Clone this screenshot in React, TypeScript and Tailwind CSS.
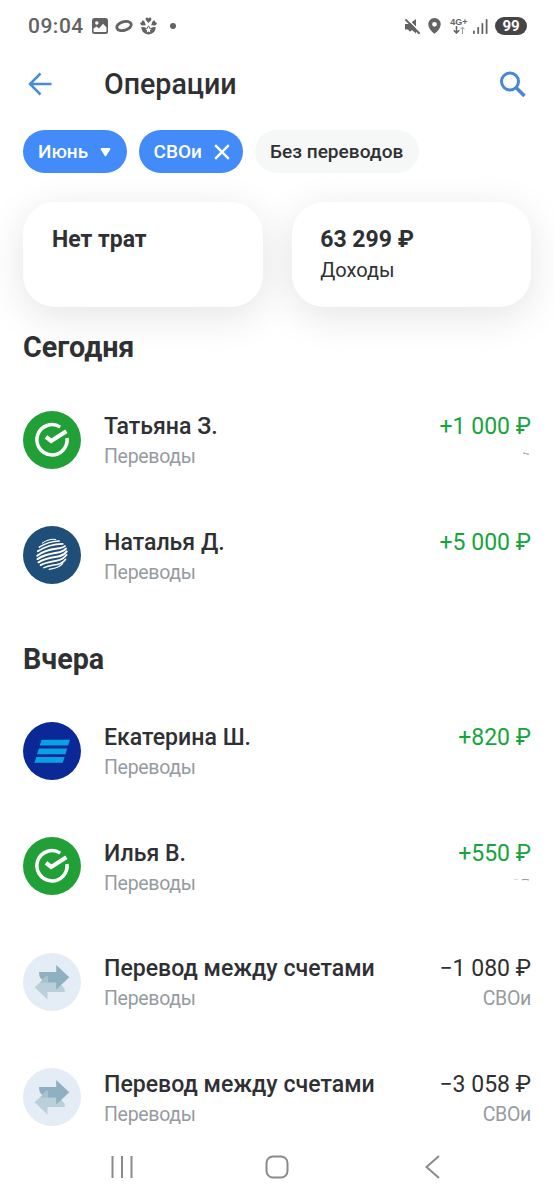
import type { ReactNode } from 'react';

type Bank = 'sber' | 'gpb' | 'vtb' | 'transfer';

interface Operation {
    id: number;
    bank: Bank;
    name: string;
    category: string;
    amount: string;
    income?: boolean;
    account?: ReactNode;
}

const today: Operation[] = [
    {
        id: 1,
        bank: 'sber',
        name: 'Татьяна З.',
        category: 'Переводы',
        amount: '+1 000 ₽',
        income: true,
        account: (
            <svg className="mt-[10px] h-[4px] w-[9px]" viewBox="0 0 9 4" fill="none">
                <path d="M1 1.2C3 .6 4 2.4 7 2.2" stroke="#8d9196" strokeWidth="1" />
            </svg>
        ),
    },
    { id: 2, bank: 'gpb', name: 'Наталья Д.', category: 'Переводы', amount: '+5 000 ₽', income: true },
];

const yesterday: Operation[] = [
    { id: 3, bank: 'vtb', name: 'Екатерина Ш.', category: 'Переводы', amount: '+820 ₽', income: true },
    {
        id: 4,
        bank: 'sber',
        name: 'Илья В.',
        category: 'Переводы',
        amount: '+550 ₽',
        income: true,
        account: (
            <svg className="mt-[9px] h-[4px] w-[18px]" viewBox="0 0 18 4" fill="none">
                <path d="M1 1.5h4" stroke="#dcdee0" strokeWidth="1" />
                <path d="M9 1.8q3-1 7 .2" stroke="#8d9196" strokeWidth="1" />
            </svg>
        ),
    },
    { id: 5, bank: 'transfer', name: 'Перевод между счетами', category: 'Переводы', amount: '−1 080 ₽', account: 'СВОи' },
    { id: 6, bank: 'transfer', name: 'Перевод между счетами', category: 'Переводы', amount: '−3 058 ₽', account: 'СВОи' },
];

function SberIcon() {
    return (
        <svg className="size-[58px]" viewBox="0 0 58 58" fill="none">
            <circle cx="29" cy="29" r="29" fill="#21a038" />
            <path d="M37.2 16.1A15.1 15.1 0 1 0 44 27" stroke="#fff" strokeWidth="3.5" />
            <path d="M23 25.8l5.2 4.2L43.4 20.2" stroke="#fff" strokeWidth="4.2" />
        </svg>
    );
}

function GpbIcon() {
    return (
        <svg className="size-[58px]" viewBox="0 0 58 58" fill="none">
            <circle cx="29" cy="29" r="29" fill="#1f4e79" />
            <g stroke="#fff" strokeLinecap="round" transform="rotate(-7 29 29) translate(-.6 -.9) scale(1.02)">
                <path d="M21 16.6q7-3.6 13.6-2" strokeWidth="1" />
                <path d="M17.5 20.2q10-4.8 20.3-3.7" strokeWidth="1.4" />
                <path d="M15.6 24q12-5.8 25.2-4.2" strokeWidth="1.7" />
                <path d="M14.5 28.2c6-3.6 14-4.6 20.5-4.6q5.5 0 7.6-1.4" strokeWidth="1.9" />
                <path d="M14.4 31.5c7-3.4 14-3.6 19.5-3.8q6.5-.3 9.4-3" strokeWidth="2" />
                <path d="M15 34.8c6-2.8 13-3 18.5-3.2q7-.3 10.2-4" strokeWidth="2" />
                <path d="M16.7 37.8c5-2 11-2 16.5-2.4q6.5-.4 10-4.5" strokeWidth="1.8" />
                <path d="M19.6 40.6c5-1.3 9-1.1 13.4-1.5q5.5-.5 8.8-4" strokeWidth="1.5" />
                <path d="M24.5 43c4-.5 9.5.2 14-4.2" strokeWidth="1.1" />
            </g>
        </svg>
    );
}

function VtbIcon() {
    return (
        <svg className="size-[58px]" viewBox="0 0 58 58">
            <circle cx="29" cy="29" r="29" fill="#0a2896" />
            <g fill="#0aa0e6">
                <path d="M18.6 17.8H47l-1.9 5.8H16.7z" />
                <path d="M15.9 26.4h28.4l-1.9 5.8H14z" />
                <path d="M13.2 35h28.4l-1.9 5.8H11.3z" />
            </g>
        </svg>
    );
}

function TransferIcon() {
    return (
        <svg className="size-[58px]" viewBox="0 0 58 58">
            <circle cx="29" cy="29" r="29" fill="#e4ecf5" />
            <path d="M24.5 22.4L11.7 34.2l12.8 12.3V39h17.3q.2-3.800-2.400-5.900L36 29H24.5z" fill="#b9cfd9" />
            <path d="M33.2 11.900L46.300 24.200 33.200 36.500v-7.100h-8.700v-7l-5.400 4.600q-3-2.500-3.100-8h17.200z" fill="#8fb0c0" />
            <path d="M24.500 22.400v7h-7.600z" fill="#a6c0cc" />
        </svg>
    );
}

const icons: Record<Bank, () => ReactNode> = {
    sber: SberIcon,
    gpb: GpbIcon,
    vtb: VtbIcon,
    transfer: TransferIcon,
};

function StatusBar() {
    return (
        <div className="flex h-[52px] items-center justify-between pl-[28px] pr-[27px] text-[#636363]">
            <div className="flex items-center">
                <span className="w-[56px] whitespace-nowrap text-[21px] font-medium leading-[26px] tracking-[0.5px]">09:04</span>
                <svg className="ml-[8px] h-[16px] w-[16px]" viewBox="0 0 16 16" fill="none">
                    <rect width="16" height="16" rx="2.5" fill="#636363" />
                    <circle cx="4.8" cy="5" r="1.7" fill="#fff" />
                    <path d="M1.5 13V10.5L4.5 8.6 7 10.5 11 5.8 14.5 9.5V13q0 1-1 1h-11q-1 0-1-1z" fill="#fff" />
                </svg>
                <svg className="ml-[7px] h-[14px] w-[18px]" viewBox="0 0 18 14" fill="none">
                    <ellipse cx="9" cy="7" rx="7.4" ry="4.3" transform="rotate(-16 9 7)" stroke="#636363" strokeWidth="2.8" />
                </svg>
                <svg className="ml-[7px] h-[18px] w-[17px]" viewBox="0 0 17 18" fill="#636363">
                    <path d="M8.5 6L5.9 3.2Q5 .5 7 .4q1.2 0 1.5 1Q8.800.4 10 .4q2 .1 1.100 2.800z" />
                    <path d="M5.800 8.200L2 8.400Q-.3 7.500.3 5.900q.6-.9 1.600-.6-.3-1.500.8-1.700 1.700-.1 2.300 2.200z" />
                    <path d="M11.200 8.200l3.800.2q2.300-.9 1.700-2.500-.6-.9-1.600-.6.300-1.500-.8-1.700-1.700-.1-2.300 2.200z" />
                    <path d="M1.300 10q3.200-.4 5 1.200L8.500 8.600l2.200 2.600q1.800-1.600 5-1.200-.2 7-7.200 7.500-7-.5-7.200-7.500z" />
                    <path d="M8.500 9.400l1 2.300 1.900.4-1.500 1.400.4 2-1.800-1-1.800 1 .4-2-1.500-1.400 1.900-.4z" fill="#fff" />
                </svg>
                <span className="ml-[13px] size-[6px] rounded-full bg-[#636363]" />
            </div>
            <div className="flex items-center">
                <svg className="h-[17px] w-[17px]" viewBox="0 0 17 17" fill="none">
                    <path d="M1 6h4L12 1v14.5L8 12l-2 1.800L4 11.500H1z" fill="#636363" />
                    <path d="M3 .3l14 14.400" stroke="#fff" strokeWidth="1.400" />
                    <path d="M1.400 1.400l14.200 14.400" stroke="#636363" strokeWidth="2" />
                </svg>
                <svg className="ml-[7px] h-[16px] w-[13px]" viewBox="0 0 13 16">
                    <path fillRule="evenodd" d="M6.500 0a6.200 6.200 0 0 1 6.200 6.200c0 4.200-4.200 7.800-6.200 9.600C4.500 14 .3 10.400.3 6.200A6.200 6.200 0 0 1 6.500 0zm0 3.900a2.400 2.400 0 1 0 0 4.800 2.400 2.400 0 0 0 0-4.800z" fill="#636363" />
                </svg>
                <div className="ml-[9px] flex w-[18px] flex-col items-center">
                    <span className="font-['Liberation_Sans'] text-[9px] font-bold leading-[8px]">4G+</span>
                    <svg className="h-[8px] w-[14px]" viewBox="0 0 14 8" fill="none">
                        <path d="M4.500 0v6.500M1.800 4.200l2.700 2.800 2.700-2.800" stroke="#636363" strokeWidth="1.500" />
                        <path d="M10.500 8V1.200M8.500 3.300l2-2.200 2 2.200" stroke="#999" strokeWidth="1" />
                    </svg>
                </div>
                <svg className="ml-[5px] h-[15px] w-[15px]" viewBox="0 0 15 15" fill="#636363">
                    <rect x="0" y="11.500" width="1.800" height="3.500" rx=".8" />
                    <rect x="4.300" y="8" width="1.800" height="7" rx=".8" />
                    <rect x="8.500" y="4" width="1.800" height="11" rx=".8" />
                    <rect x="12.700" y="0" width="1.800" height="15" rx=".8" />
                </svg>
                <span className="ml-[7px] flex h-[18px] w-[32px] items-center justify-center rounded-full bg-[#454545] text-[15px] font-bold leading-none text-white">
                    99
                </span>
            </div>
        </div>
    );
}

function OperationRow({ operation }: { operation: Operation }) {
    const Icon = icons[operation.bank];

    return (
        <li className="flex h-[115.5px] items-center">
            <Icon />
            <div className="ml-[23px] flex flex-1 items-start justify-between pt-[4.6px]">
                <div>
                    <p className="text-[23.1px] font-medium leading-[30px] text-[#2f3033]">{operation.name}</p>
                    <p className="text-[19.5px] leading-[29.5px] tracking-[-0.3px] text-[#959ba1]">{operation.category}</p>
                </div>
                <div className="flex flex-col items-end">
                    <p className={operation.income ? 'text-[23px] leading-[30px] text-[#16a53c]' : 'text-[23px] leading-[30px] text-[#2f3033]'}>
                        {operation.amount}
                    </p>
                    <div className="text-[19.5px] leading-[29.5px] tracking-[-0.3px] text-[#959ba1]">{operation.account}</div>
                </div>
            </div>
        </li>
    );
}

function OperationList({ operations }: { operations: Operation[] }) {
    return (
        <ul>
            {operations.map((operation) => (
                <OperationRow key={operation.id} operation={operation} />
            ))}
        </ul>
    );
}

export default function App() {
    return (
        <div className="flex h-[1200px] w-[554px] flex-col overflow-hidden bg-white font-[Roboto,sans-serif] text-[#2f3033]">
            <StatusBar />

            <header className="flex h-[64px] items-center pl-[28px] pr-[28px]">
                <svg className="h-[24px] w-[25px]" viewBox="0 0 25 24" fill="none">
                    <path d="M23.500 12H2M12.500 1.500L2 12l10.500 10.500" stroke="#4a8be0" strokeWidth="2.500" />
                </svg>
                <h1 className="ml-[51px] flex-1 text-[28.6px] font-medium leading-[34px]">Операции</h1>
                <svg className="h-[27px] w-[27px]" viewBox="0 0 27 27" fill="none">
                    <circle cx="11" cy="10.500" r="8.500" stroke="#4a86d4" strokeWidth="3" />
                    <path d="M17 16.500l8.500 8.500" stroke="#4a86d4" strokeWidth="3.600" />
                </svg>
            </header>

            <div className="mt-[14px] flex gap-[12px] pl-[23px] text-[19px] font-medium leading-[43px]">
                <button className="flex h-[43px] w-[104px] items-center rounded-full bg-[#428bf9] pl-[15px] text-white">
                    Июнь
                    <svg className="ml-[12px] mt-[2px] h-[9px] w-[11px]" viewBox="0 0 11 9">
                        <path d="M1.500 0h8q1.300.2.700 1.400L6.300 7.800q-.8 1.200-1.600 0L.8 1.400Q.2.2 1.500 0z" fill="#fff" />
                    </svg>
                </button>
                <button className="-ml-[0.5px] flex h-[43px] w-[104.5px] items-center rounded-full bg-[#428bf9] pl-[15px] text-white">
                    СВОи
                    <svg className="ml-[12px] h-[16px] w-[16px]" viewBox="0 0 16 16" fill="none">
                        <path d="M1.200 1.200l13.600 13.600M14.800 1.200L1.200 14.800" stroke="#fff" strokeWidth="2.400" />
                    </svg>
                </button>
                <button className="flex h-[43px] w-[163.5px] items-center whitespace-nowrap rounded-full bg-[#f6f8f8] pl-[15px] text-[19.1px] text-[#2f3033]">
                    Без переводов
                </button>
            </div>

            <div className="mt-[29px] flex gap-[29px] px-[23px]">
                <div className="h-[105px] flex-1 rounded-[32px] bg-white pl-[29px] pt-[23px] shadow-[0_9px_40px_rgba(0,0,0,0.11)]">
                    <p className="text-[23px] font-bold leading-[30px]">Нет трат</p>
                </div>
                <div className="h-[105px] flex-1 rounded-[32px] bg-white pl-[28.5px] pt-[23px] shadow-[0_9px_40px_rgba(0,0,0,0.11)]">
                    <p className="text-[23px] font-bold leading-[30px]">63 299 ₽</p>
                    <p className="text-[20px] leading-[30px]">Доходы</p>
                </div>
            </div>

            <main className="px-[23px]">
                <h2 className="mt-[22px] text-[28.7px] font-bold leading-[36px]">Сегодня</h2>
                <div className="mt-[17px]">
                    <OperationList operations={today} />
                </div>
                <h2 className="mt-[28px] text-[28.7px] font-bold leading-[36px]">Вчера</h2>
                <div className="mt-[16px]">
                    <OperationList operations={yesterday} />
                </div>
            </main>

            <nav className="flex h-[24px] shrink-0 items-center pl-[111px]">
                <svg className="h-[22px] w-[22px]" viewBox="0 0 22 22" fill="none" stroke="#8a8a8a" strokeWidth="2">
                    <path d="M1.500 0v22M11 0v22M20.500 0v22" />
                </svg>
                <svg className="ml-[132px] h-[24px] w-[24px]" viewBox="0 0 24 24" fill="none" stroke="#8a8a8a" strokeWidth="2">
                    <rect x="1.500" y="1.500" width="21" height="21" rx="6.500" />
                </svg>
                <svg className="ml-[136px] h-[24px] w-[15px]" viewBox="0 0 15 24" fill="none" stroke="#8a8a8a" strokeWidth="2">
                    <path d="M14 1L1.500 12 14 23" />
                </svg>
            </nav>
        </div>
    );
}
